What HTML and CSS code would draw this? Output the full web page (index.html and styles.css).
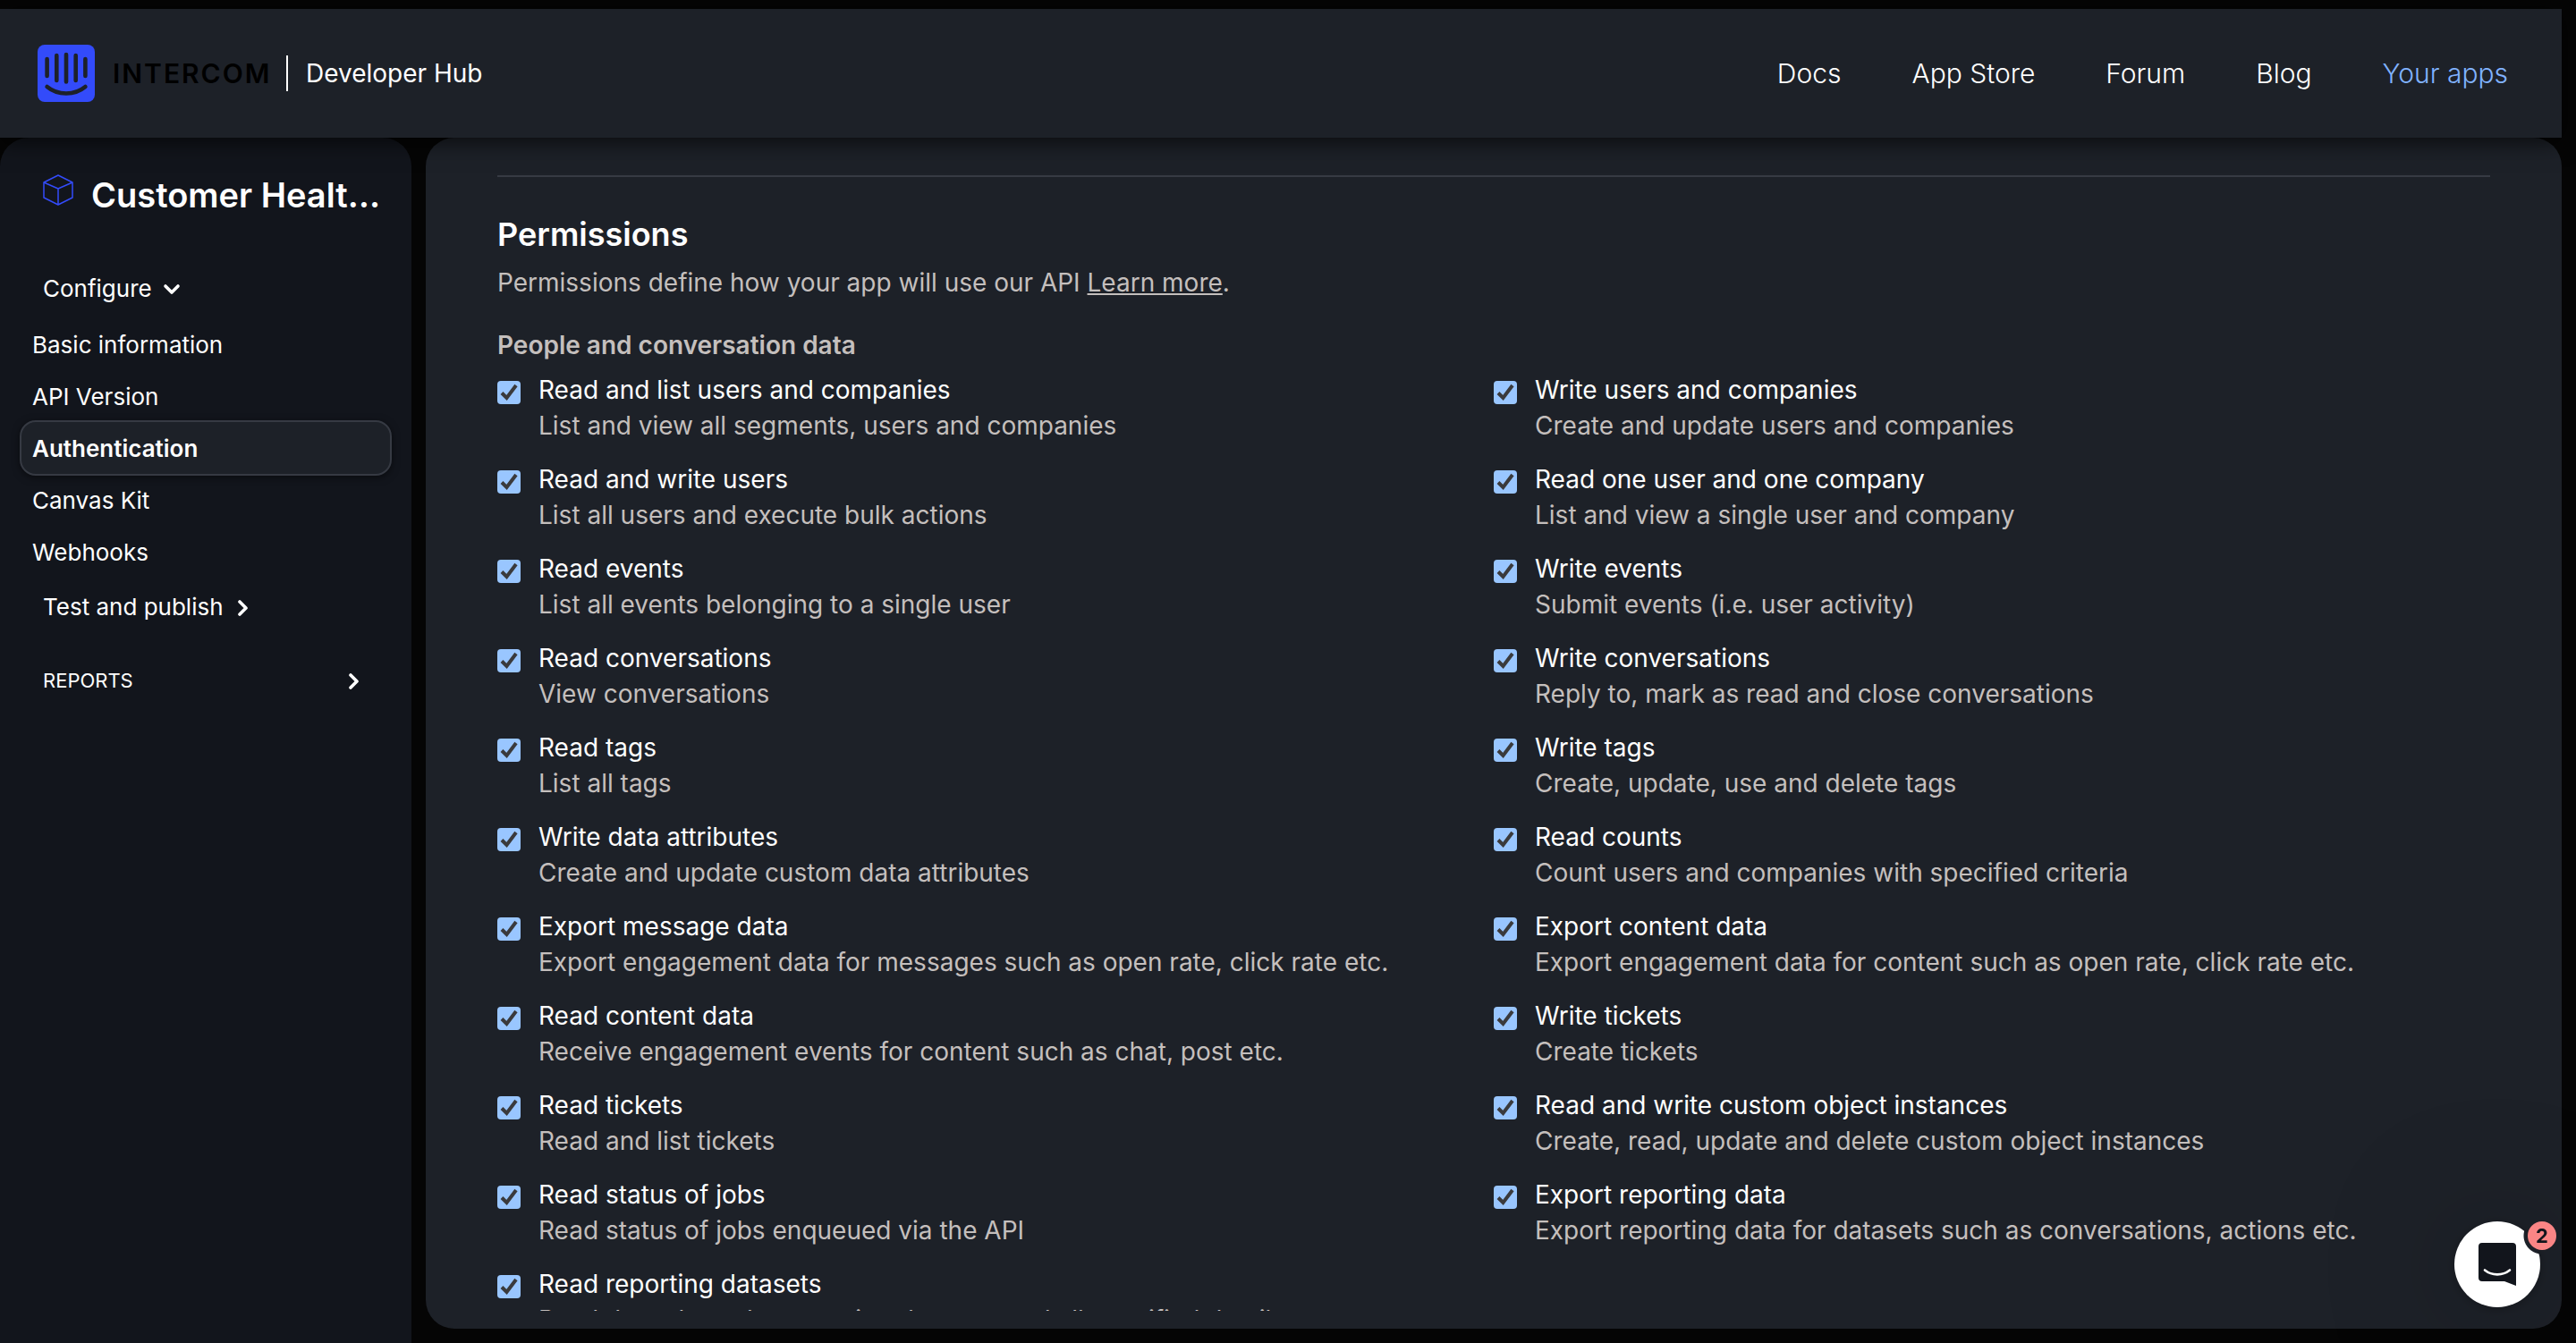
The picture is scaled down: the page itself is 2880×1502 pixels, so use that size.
FILE: index.html
```html
<!DOCTYPE html>
<html lang="en">
<head>
<meta charset="utf-8">
<title>Developer Hub</title>
<link rel="stylesheet" href="styles.css">
</head>
<body>
<header class="topbar">
  <a class="brand" href="#">
    <svg class="brand-mark" viewBox="0 0 64 64" aria-hidden="true">
      <rect width="64" height="64" rx="8" fill="#334bfa"/>
      <g fill="none" stroke="#1d2128" stroke-width="4.6" stroke-linecap="round">
        <path d="M10.600 16v19M21.300 12v28M32 11v30.500M42.700 12v28M53.400 16v19M10.600 47c12 10 30.800 10 42.800 0"/>
      </g>
    </svg>
    <span class="wordmark">INTERCOM</span>
    <span class="brand-sub">Developer Hub</span>
  </a>
  <nav class="topnav">
    <a href="#">Docs</a>
    <a href="#">App Store</a>
    <a href="#">Forum</a>
    <a href="#">Blog</a>
    <a class="current" href="#">Your apps</a>
  </nav>
</header>
<div class="layout">
  <aside class="sidebar">
    <div class="app-title">
      <svg class="cube" viewBox="0 -1 34 36" aria-hidden="true"><path d="M17 1 33 9v17l-16 8-16-8V9zM1 9l16 7 16-7M17 16v18" fill="none" stroke="#334bfa" stroke-width="1.500" stroke-linejoin="round"/></svg>
      <h1>Customer Health Score</h1>
    </div>
    <nav class="menu">
      <button class="group" type="button">Configure
        <svg class="chevron" viewBox="0 0 20 20" aria-hidden="true"><path d="M3 7l7 7 7-7"/></svg>
      </button>
      <a href="#">Basic information</a>
      <a href="#">API Version</a>
      <a class="active" href="#">Authentication</a>
      <a href="#">Canvas Kit</a>
      <a href="#">Webhooks</a>
      <button class="group spaced" type="button">Test and publish
        <svg class="chevron" viewBox="0 0 20 20" aria-hidden="true"><path d="M6 4l7 7-7 7"/></svg>
      </button>
      <button class="group reports" type="button">REPORTS
        <svg class="chevron" viewBox="0 0 20 20" aria-hidden="true"><path d="M6 4l7 7-7 7"/></svg>
      </button>
    </nav>
  </aside>
  <main class="panel">
    <div class="scroll">
      <hr>
      <h2>Permissions</h2>
      <p class="intro">Permissions define how your app will use our API <a href="#">Learn more</a>.</p>
      <h3>People and conversation data</h3>
      <div class="grid">
        <label class="perm"><input type="checkbox" checked><span class="name">Read and list users and companies</span><span class="desc">List and view all segments, users and companies</span></label>
        <label class="perm"><input type="checkbox" checked><span class="name">Write users and companies</span><span class="desc">Create and update users and companies</span></label>
        <label class="perm"><input type="checkbox" checked><span class="name">Read and write users</span><span class="desc">List all users and execute bulk actions</span></label>
        <label class="perm"><input type="checkbox" checked><span class="name">Read one user and one company</span><span class="desc">List and view a single user and company</span></label>
        <label class="perm"><input type="checkbox" checked><span class="name">Read events</span><span class="desc">List all events belonging to a single user</span></label>
        <label class="perm"><input type="checkbox" checked><span class="name">Write events</span><span class="desc">Submit events (i.e. user activity)</span></label>
        <label class="perm"><input type="checkbox" checked><span class="name">Read conversations</span><span class="desc">View conversations</span></label>
        <label class="perm"><input type="checkbox" checked><span class="name">Write conversations</span><span class="desc">Reply to, mark as read and close conversations</span></label>
        <label class="perm"><input type="checkbox" checked><span class="name">Read tags</span><span class="desc">List all tags</span></label>
        <label class="perm"><input type="checkbox" checked><span class="name">Write tags</span><span class="desc">Create, update, use and delete tags</span></label>
        <label class="perm"><input type="checkbox" checked><span class="name">Write data attributes</span><span class="desc">Create and update custom data attributes</span></label>
        <label class="perm"><input type="checkbox" checked><span class="name">Read counts</span><span class="desc">Count users and companies with specified criteria</span></label>
        <label class="perm"><input type="checkbox" checked><span class="name">Export message data</span><span class="desc">Export engagement data for messages such as open rate, click rate etc.</span></label>
        <label class="perm"><input type="checkbox" checked><span class="name">Export content data</span><span class="desc">Export engagement data for content such as open rate, click rate etc.</span></label>
        <label class="perm"><input type="checkbox" checked><span class="name">Read content data</span><span class="desc">Receive engagement events for content such as chat, post etc.</span></label>
        <label class="perm"><input type="checkbox" checked><span class="name">Write tickets</span><span class="desc">Create tickets</span></label>
        <label class="perm"><input type="checkbox" checked><span class="name">Read tickets</span><span class="desc">Read and list tickets</span></label>
        <label class="perm"><input type="checkbox" checked><span class="name">Read and write custom object instances</span><span class="desc">Create, read, update and delete custom object instances</span></label>
        <label class="perm"><input type="checkbox" checked><span class="name">Read status of jobs</span><span class="desc">Read status of jobs enqueued via the API</span></label>
        <label class="perm"><input type="checkbox" checked><span class="name">Export reporting data</span><span class="desc">Export reporting data for datasets such as conversations, actions etc.</span></label>
        <label class="perm"><input type="checkbox" checked><span class="name">Read reporting datasets</span><span class="desc">Read data about the reporting datasets and all specified details</span></label>
      </div>
    </div>
  </main>
</div>
<button class="messenger" type="button" aria-label="Open messenger">
  <svg viewBox="0 0 96 96" aria-hidden="true">
    <path d="M31 24h34a4 4 0 0 1 4 4v44l-13-5H31a4 4 0 0 1-4-4V28a4 4 0 0 1 4-4z" fill="#12151c"/>
    <path d="M34 54.500c8 6.500 20 6.500 28 0" fill="none" stroke="#fff" stroke-width="2.600" stroke-linecap="round"/>
  </svg>
  <span class="badge">2</span>
</button>
</body>
</html>
```
FILE: styles.css
```css
* { box-sizing: border-box; }

body {
  margin: 0;
  height: 100vh;
  padding: 10px 16px 16px 0;
  display: flex;
  flex-direction: column;
  background: #050505;
  color: #fff;
  font: 28px/40px Inter, "Liberation Sans", sans-serif;
  overflow: hidden;
}

a { color: inherit; text-decoration: none; }

button {
  border: 0;
  padding: 0;
  background: none;
  color: inherit;
  font: inherit;
  cursor: pointer;
}

/* Top bar */
.topbar {
  position: relative;
  z-index: 1;
  flex: none;
  height: 144px;
  padding: 0 60px 0 42px;
  display: flex;
  align-items: center;
  justify-content: space-between;
  background: #1d2128;
  box-shadow: 0 4px 24px rgba(0, 0, 0, .7);
}

.brand { display: flex; align-items: center; }
.brand-mark { width: 64px; height: 64px; margin-right: 20px; }
.wordmark {
  width: 194px;
  color: #000;
  font-size: 30px;
  font-weight: 600;
  letter-spacing: 2px;
}
.brand-sub { border-left: 2px solid #fff; padding-left: 20px; }

.topnav {
  display: flex;
  gap: 79px;
  font-size: 30px;
  font-weight: 300;
}
.topnav .current { color: #80b2ff; }

/* Two column layout */
.layout {
  flex: 1;
  min-height: 0;
  display: grid;
  grid-template-columns: 460px minmax(0, 1fr);
  gap: 16px;
}

.sidebar {
  margin-bottom: -16px;
  padding: 40px 22px 0;
  border-radius: 32px 32px 0 0;
  background: #12151c;
}

.app-title {
  display: flex;
  gap: 20px;
  padding: 0 8px 0 26px;
}
.cube { flex: none; width: 34px; height: 36px; }
.app-title h1 {
  margin: 0;
  font-size: 38px;
  line-height: 48px;
  font-weight: 600;
  white-space: nowrap;
  overflow: hidden;
  text-overflow: ellipsis;
}

.menu {
  display: flex;
  flex-direction: column;
  margin-top: 50px;
  font-size: 26px;
}
.menu a {
  height: 62px;
  margin-bottom: -4px;
  padding: 0 12px;
  border: 2px solid transparent;
  border-radius: 18px;
  line-height: 60px;
}
.menu .active {
  background: #1d2128;
  border-color: #363a43;
  box-shadow: 0 2px 8px rgba(0, 0, 0, .5);
  font-weight: 600;
}
.group {
  display: flex;
  align-items: center;
  gap: 12px;
  height: 62px;
  padding: 0 32px 0 26px;
}
.spaced { margin-top: 4px; }
.reports {
  justify-content: space-between;
  margin-top: 20px;
  font-size: 22px;
}
.chevron {
  width: 20px;
  height: 20px;
  fill: none;
  stroke: #fff;
  stroke-width: 3.6;
  stroke-linecap: round;
  stroke-linejoin: round;
}

/* Main panel */
.panel {
  min-height: 0;
  padding: 0 80px 20px;
  border-radius: 32px;
  background: #1d2128;
}
.scroll { height: 100%; overflow: hidden; }
.scroll hr {
  margin: 42px 0 40px;
  border: 0;
  border-top: 2px solid #363a43;
}
h2 { margin: 0; font-size: 36px; line-height: 48px; font-weight: 600; }
.intro { margin: 10px 0 30px; color: #c4bfbd; }
.intro a { text-decoration: underline; }
h3 { margin: 0 0 10px; font-size: 28px; font-weight: 600; color: #c4bfbd; }

.grid {
  display: grid;
  grid-template-columns: 1fr 1fr;
  row-gap: 20px;
}
.perm {
  display: grid;
  grid-template-columns: 46px 1fr;
}
.perm input {
  appearance: none;
  width: 26px;
  height: 26px;
  margin: 10px 0 0;
  border-radius: 4px;
  background: #99c6ff url("data:image/svg+xml,%3Csvg xmlns='http://www.w3.org/2000/svg' viewBox='0 0 26 26'%3E%3Cpath d='M5 13.500l5.500 5.500L21 5' fill='none' stroke='%233a3a3c' stroke-width='4'/%3E%3C/svg%3E");
}
.desc { grid-column: 2; color: #c4bfbd; }

/* Messenger launcher */
.messenger {
  position: fixed;
  z-index: 2;
  right: 40px;
  bottom: 40px;
  width: 96px;
  height: 96px;
  border-radius: 50%;
  background: radial-gradient(circle at 98px 16px, transparent 20px, #fff 21px);
  box-shadow: 0 2px 12px rgba(0, 0, 0, .25), 0 4px 160px rgba(0, 0, 0, .3);
}
.messenger svg { display: block; width: 96px; height: 96px; }
.badge {
  position: absolute;
  top: 0;
  right: -18px;
  width: 32px;
  height: 32px;
  border-radius: 50%;
  background: #fa8585;
  color: #12151c;
  font-size: 22px;
  line-height: 32px;
  font-weight: 700;
  text-align: center;
}
```
